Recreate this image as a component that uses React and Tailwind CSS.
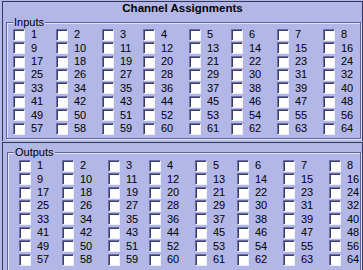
import React from "react";

const COLS = "grid-cols-[43px_46px_41px_46px_42px_46px_46px_36px]";

function Check({ n }) {
  return (
    <div className="flex h-[13.43px] items-center">
      <span className="block h-3 w-3 shrink-0 border-t border-l border-[#6a6ea4] border-r-[#eef0ff] border-b-[#eef0ff] border-r border-b bg-white shadow-[inset_1px_1px_0_#3c3e66]" />
      <span className="ml-[6px] text-[11px] leading-none text-black">{n}</span>
    </div>
  );
}

function Group({ label, className }) {
  const nums = Array.from({ length: 64 }, (_, i) => i + 1);
  return (
    <div
      className={`relative border border-[#5e629c] shadow-[inset_1px_1px_0_#e2e4fb,1px_1px_0_#e2e4fb] ${className}`}
    >
      <span className="absolute top-[-7px] left-[6px] bg-[#b3b7e7] px-[1px] text-[11px] leading-[13px] text-black">
        {label}
      </span>
      <div className={`grid ${COLS}`}>
        {nums.map((n) => (
          <Check key={n} n={n} />
        ))}
      </div>
    </div>
  );
}

export default function App() {
  return (
    <div
      className="h-[270px] w-[363px] overflow-hidden bg-[#b3b7e7]"
      style={{ fontFamily: '"Liberation Sans", Arial, sans-serif' }}
    >
      <div className="mt-[1px] ml-[2px] h-[140px] border-t border-l border-r border-[#34365a]">
        <div className="flex h-[14px] items-center justify-center text-[11.5px] font-bold leading-none text-black">
          Channel Assignments
        </div>
        <Group label="Inputs" className="mt-[6px] ml-[3px] mr-[1px] pt-[5px] pb-[3px] pl-[6px]" />
      </div>
      <div className="mt-[1px] ml-[2px] h-[130px] border-t border-l border-r border-[#34365a]">
        <Group label="Outputs" className="mt-[9px] ml-[4px] mr-[1px] pt-[6px] pb-[4px] pl-[11px]" />
      </div>
    </div>
  );
}
